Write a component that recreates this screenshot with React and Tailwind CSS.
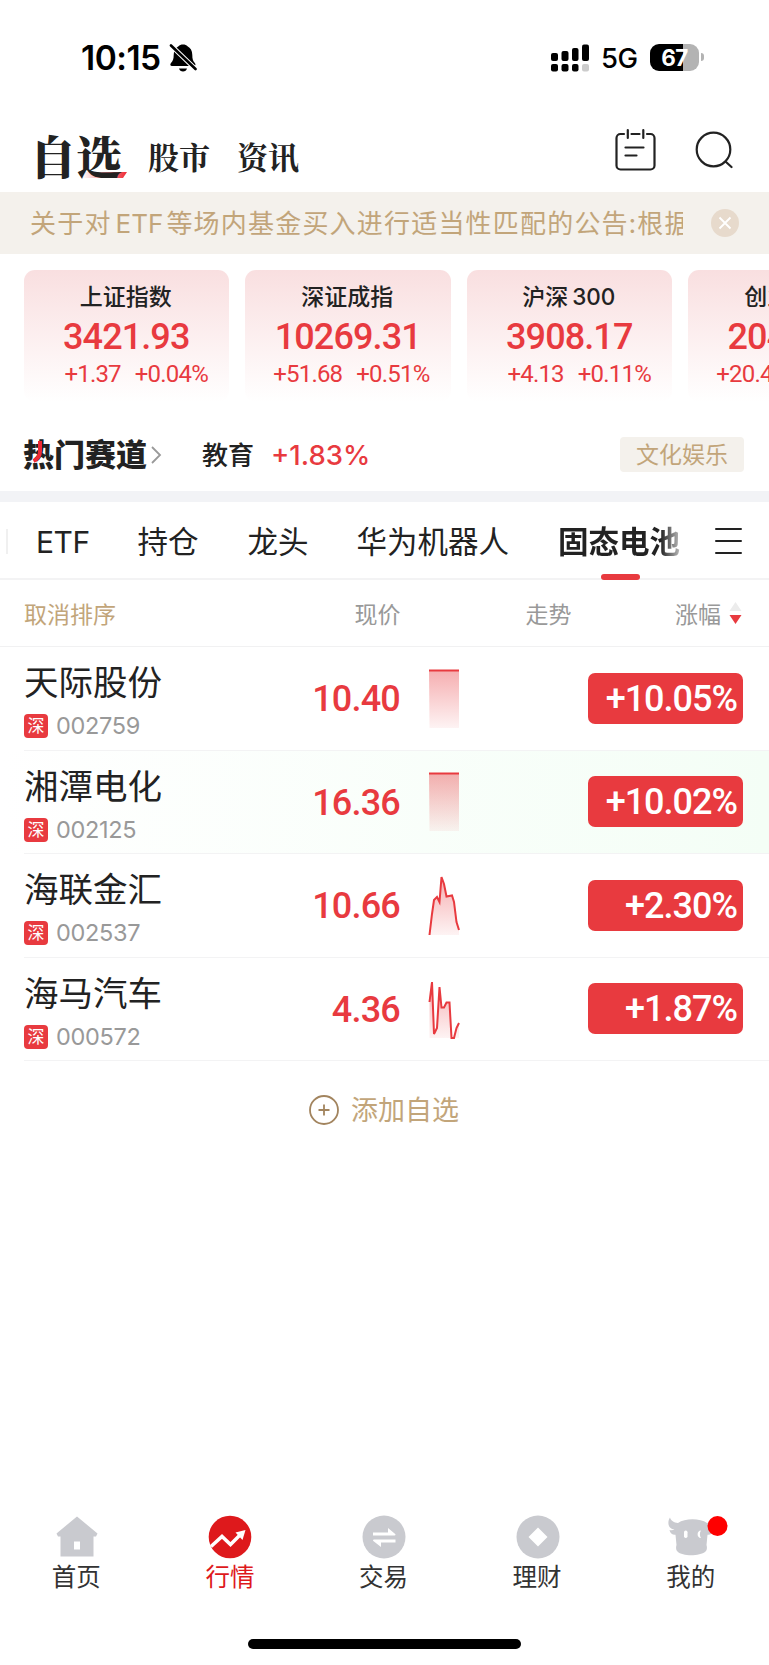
const indexes = [
    { name: "上证指数", value: "3421.93", change: "+1.37", percent: "+0.04%" },
    { name: "深证成指", value: "10269.31", change: "+51.68", percent: "+0.51%" },
    { name: "沪深", suffix: "300", value: "3908.17", change: "+4.13", percent: "+0.11%" },
    { name: "创业板指", value: "2048.57", change: "+20.41", percent: "+1.01%" },
];

const stocks = [
    { name: "天际股份", code: "002759", price: "10.40", percent: "+10.05%", line: "0,1.5 30,1.5" },
    { name: "湘潭电化", code: "002125", price: "16.36", percent: "+10.02%", line: "0,1.5 30,1.5", active: true },
    {
        name: "海联金汇",
        code: "002537",
        price: "10.66",
        percent: "+2.30%",
        line: "0.5,59 3,38 5,24 8,21 10.5,26 12.5,1 15,8 17.5,20.5 23,19.5 25,26 27.5,46 30,54",
    },
    {
        name: "海马汽车",
        code: "000572",
        price: "4.36",
        percent: "+1.87%",
        line: "0.5,23 3,3 5,55 8,49 10.5,8 12.5,28.5 15,28.5 17.5,23.5 20.5,23.5 22.5,59 25,59 27.5,49 30,44",
    },
];

function BellOff() {
    return (
        <svg width="28" height="30" viewBox="0 0 28 30" className="ml-[8px] shrink-0">
            <path d="M14 1.500c2 0 3.500.6 4.500 1.800 3 1.500 4.800 4.500 4.800 8.700 0 4 .7 6 2.500 8 1.200 1.300.8 3-1 3H3c-1.800 0-2.200-1.700-1-3 1.800-2 2.700-4 2.700-8 0-4.200 1.800-7.200 4.800-8.700 1-1.200 2.500-1.800 4.500-1.800z" />
            <path d="M10 25.500h8c-.5 1.900-2 3-4 3s-3.500-1.100-4-3z" />
            <path d="M1 1.500 27 26.500" stroke="#fff" strokeWidth="4.800" />
            <path d="M2 2.500 26.500 26" stroke="#000" strokeWidth="2.600" strokeLinecap="round" />
        </svg>
    );
}

function Signal() {
    return (
        <svg width="38" height="28" viewBox="0 0 38 28">
            <rect x="0" y="9" width="7" height="8" rx="2" />
            <rect x="10.500" y="7" width="7" height="10" rx="2" />
            <rect x="21" y="4" width="6.500" height="13" rx="2" />
            <rect x="31" y="0.500" width="7" height="16.500" rx="2" />
            <rect x="0" y="20" width="7" height="7.500" rx="2" />
            <rect x="10.500" y="20" width="7" height="7.500" rx="2" />
            <rect x="21" y="20" width="6.500" height="7.500" rx="2" />
            <rect x="31" y="20" width="7" height="7.500" rx="2" fill="#ccc" />
        </svg>
    );
}

function StatusBar() {
    return (
        <div className="h-[116px] flex items-center justify-between pl-[81px] pr-[65px] text-black font-['Inter',sans-serif]">
            <div className="flex items-center">
                <span className="text-[33.500px] font-semibold tracking-[-0.500px]">10:15</span>
                <BellOff />
            </div>
            <div className="flex items-center">
                <Signal />
                <span className="ml-[12px] mt-[2px] w-[49px] text-[27.500px] font-medium tracking-[-0.500px]">5G</span>
                <div className="-mt-[2px] w-[49px] h-[27px] rounded-[9px] bg-[linear-gradient(90deg,#000_67%,#b3b3b3_67%)] text-white text-[22.500px] leading-[27px] font-bold text-center tracking-[-0.500px]">
                    67
                </div>
                <div className="-mt-[2px] ml-[2px] w-[3px] h-[8px] rounded-r-full bg-[#b3b3b3]"></div>
            </div>
        </div>
    );
}

function Header() {
    return (
        <div className="h-[76px] flex items-center pl-[30px] pr-[36px] text-[#222] font-['Noto_Serif_CJK_SC','Noto_Serif_SC','Noto_Sans_CJK_SC',serif]">
            <div className="relative text-[46px] leading-[60px] font-black">
                <svg width="46" height="6" viewBox="0 0 46 6" className="absolute left-[52px] top-[48px]">
                    <defs>
                        <linearGradient id="swoosh">
                            <stop offset="0" stopColor="#ee2a35" stopOpacity="0" />
                            <stop offset="1" stopColor="#ee2a35" />
                        </linearGradient>
                    </defs>
                    <path d="M3 0H45L41 6H0z" fill="url(#swoosh)" />
                </svg>
                <span className="relative">自选</span>
            </div>
            <span className="ml-[26px] mt-[5px] text-[31px] font-bold">股市</span>
            <span className="ml-[27px] mt-[5px] text-[31px] font-bold">资讯</span>
            <svg width="42" height="44" viewBox="0 0 42 44" fill="none" stroke="#222" strokeWidth="2.200" strokeLinecap="round" className="ml-auto -mt-[10px]">
                <path d="M9 7H5.500a4 4 0 0 0-4 4v27.500a4 4 0 0 0 4 4h30a4 4 0 0 0 4-4V11a4 4 0 0 0-4-4H32M16.500 7h8M12.800 3v8M28.300 3v8" />
                <path d="M10.500 20.500h18M10.500 28.500h11" />
            </svg>
            <svg width="38" height="38" viewBox="0 0 38 38" fill="none" stroke="#222" strokeWidth="2.200" strokeLinecap="round" className="ml-[38px] -mt-[8px]">
                <circle cx="18.500" cy="18.500" r="16.800" />
                <path d="m31 31 5.500 5" />
            </svg>
        </div>
    );
}

function Notice() {
    return (
        <div className="h-[62px] bg-[#f4f1ec] flex items-center pl-[30px] pr-[30px]">
            <p className="w-[653px] pb-[1px] overflow-hidden whitespace-nowrap text-[26px] tracking-[1.200px] text-[#c2a57a]">
                关于对<span className="ml-[4px] mr-[3px] font-['Inter',sans-serif] text-[26px] tracking-[0px]">ETF</span>等场内基金买入进行适当性匹配的公告:根据
            </p>
            <svg width="28" height="28" viewBox="0 0 28 28" className="ml-auto shrink-0">
                <circle cx="14" cy="14" r="14" fill="#e7dacc" />
                <path d="m8.500 8.500 11 11m0-11-11 11" stroke="#fff" strokeWidth="1.800" />
            </svg>
        </div>
    );
}

function IndexCards() {
    return (
        <div className="h-[148px] pt-4 pl-[23.500px] flex gap-4 overflow-hidden">
            {indexes.map((item) => (
                <div key={item.name} className="w-[205.500px] h-[132px] shrink-0 rounded-[11px] bg-linear-to-b from-[#f9dfe0] to-white flex flex-col items-center pt-[11px]">
                    <div className="h-[28px] pr-[1px] text-[23px] leading-[28px] text-[#222] font-medium">
                        {item.name}
                        {item.suffix && <span className="ml-[4px] font-['Inter',sans-serif] text-[22.500px] leading-none">{item.suffix}</span>}
                    </div>
                    <div className="mt-[7px] text-[36px] leading-[42px] tracking-[-0.900px] font-medium text-[#e83a3f] font-['Roboto',sans-serif]">{item.value}</div>
                    <div className="mt-[2px] w-full pr-[21px] flex justify-end gap-[14px] text-[24px] leading-[28px] tracking-[-0.800px] text-[#e83a3f] font-['Roboto',sans-serif]">
                        <span>{item.change}</span>
                        <span>{item.percent}</span>
                    </div>
                </div>
            ))}
        </div>
    );
}

function HotTrack() {
    return (
        <div className="h-[89px] pt-[17px] flex items-center pl-[23px] pr-[25px] text-[#222]">
            <div className="relative -mt-[4px] text-[31px] leading-[40px] font-black">
                热门赛道
                <svg width="12" height="22" viewBox="0 0 12 22" className="absolute left-[9px] top-[8px]" fill="none" stroke="#ee2a35" strokeWidth="4">
                    <path d="M8 0V10q0 7-6.500 10" />
                </svg>
            </div>
            <svg width="12" height="20" viewBox="0 0 12 20" fill="none" stroke="#999" strokeWidth="1.800" className="ml-[3px]">
                <path d="m2 2 8 8-8 8" />
            </svg>
            <span className="ml-[40px] -mt-[3px] text-[26px] font-medium">教育</span>
            <span className="ml-[17px] mt-[1px] text-[27.500px] font-medium text-[#e83a3f] font-['Inter',sans-serif]">+1.83%</span>
            <span className="ml-auto -mt-[1px] w-[124px] h-[35px] rounded-[4px] bg-[#f4f1ec] text-[23px] leading-[33px] text-center text-[#c2a57a]">文化娱乐</span>
        </div>
    );
}

function GroupTabs() {
    return (
        <div className="h-[78px] border-b-2 border-[#f3f3f4] flex items-center text-[30.500px] text-[#222] pl-[6px] pr-[27px]">
            <div className="mt-[2px] w-[2px] h-[25px] bg-[#f0f0f0]"></div>
            <span className="ml-[28px] mt-[4px] font-['Inter',sans-serif] text-[30px] tracking-[-0.500px]">ETF</span>
            <span className="ml-[48px] mt-[2px]">持仓</span>
            <span className="ml-[49px] mt-[2px]">龙头</span>
            <span className="ml-[48px] mt-[2px]">华为机器人</span>
            <div className="relative ml-[49px] h-[78px] leading-[78px] font-bold">
                <span className="bg-[linear-gradient(90deg,#222_84%,#bbb_100%)] bg-clip-text text-transparent">固态电池</span>
                <div className="absolute left-[43px] bottom-[-1px] w-[39px] h-[6px] rounded-full bg-[#e83a3f]"></div>
            </div>
            <svg width="27" height="28" viewBox="0 0 27 28" stroke="#222" strokeWidth="2" strokeLinecap="round" className="ml-auto mt-[2px]">
                <path d="M1 2h25M1 14h25M1 26h25" />
            </svg>
        </div>
    );
}

function ListHeader() {
    return (
        <div className="h-[67px] border-b border-[#f1f1f2] flex items-center pl-6 pr-[27px] text-[23px] text-[#999]">
            <span className="w-[200px] text-[#c2a57a]">取消排序</span>
            <span className="w-[176.500px] text-right">现价</span>
            <span className="w-[171px] text-right">走势</span>
            <span className="ml-auto">涨幅</span>
            <svg width="13" height="24" viewBox="0 0 13 24" className="ml-[8px]">
                <path d="M6.500 1 12.500 10H.5z" fill="#ececec" />
                <path d="M.5 14h12l-6 9z" fill="#e83a3f" />
            </svg>
        </div>
    );
}

function Spark({ line }) {
    return (
        <svg width="31" height="62" viewBox="0 0 31 62" className="ml-[28px] mt-[3px] overflow-visible">
            <defs>
                <linearGradient id="fill" x1="0" y1="0" x2="0" y2="59" gradientUnits="userSpaceOnUse">
                    <stop offset="0" stopColor="#e83a3f" stopOpacity="0.420" />
                    <stop offset="1" stopColor="#e83a3f" stopOpacity="0.060" />
                </linearGradient>
            </defs>
            <polygon points={`${line} 30,59 0.500,59`} fill="url(#fill)" />
            <polyline points={line} fill="none" stroke="#e83a3f" strokeWidth="2" />
        </svg>
    );
}

function StockRow({ stock }) {
    return (
        <div className={`h-[103.500px] pl-6 ${stock.active ? "bg-linear-to-r from-white to-[#f4fef6]" : ""}`}>
            <div className="h-full border-b border-[#f3f3f4] flex items-center pr-[26px]">
                <div className="w-[200px] pt-[2px]">
                    <div className="text-[34.500px] leading-[42px] text-[#222]">{stock.name}</div>
                    <div className="mt-[12px] flex items-center gap-2">
                        <span className="w-[24px] h-[24px] rounded-[4px] bg-[#e83a3f] text-white text-[17px] leading-[22px] text-center">深</span>
                        <span className="text-[23.500px] leading-[26px] text-[#999] font-['Inter',sans-serif] tracking-[-0.300px]">{stock.code}</span>
                    </div>
                </div>
                <div className="w-[176px] pt-[2px] text-right text-[36px] tracking-[-0.800px] font-medium text-[#e83a3f] font-['Roboto',sans-serif]">{stock.price}</div>
                <div className="w-px"></div>
                <Spark line={stock.line} />
                <div className="ml-auto w-[155px] h-[51px] rounded-[7px] bg-[#e83a3f] pr-[6px] text-right text-[36px] leading-[52px] tracking-[-1px] font-medium text-white font-['Roboto',sans-serif]">
                    {stock.percent}
                </div>
            </div>
        </div>
    );
}

function HomeIcon() {
    return (
        <svg width="44" height="44" viewBox="0 0 44 44" fill="#c9cacf">
            <path fillRule="evenodd" d="M22 1.500 42.500 18.500 41 21.500H38.500V41.500H5.500V21.500H3L1.500 18.500zM19 26.500V34.500H25V26.500z" />
        </svg>
    );
}

function MarketIcon() {
    return (
        <svg width="44" height="44" viewBox="0 0 44 44">
            <circle cx="22" cy="22" r="21.300" fill="#de191c" />
            <path d="M3 31.500 14 21.500 22.500 29.500 33 19" fill="none" stroke="#fff" strokeWidth="3.500" />
            <path d="M27.500 17.500 37.500 15 34.500 25z" fill="#fff" />
        </svg>
    );
}

function TradeIcon() {
    return (
        <svg width="44" height="44" viewBox="0 0 44 44">
            <circle cx="22" cy="22" r="21.500" fill="#c9cacf" />
            <path d="M11 17.500H26V13L33.500 19.200Q33.500 20.500 32.500 20.500H11zM33.500 27.500H19V32L11 25.800Q11 24.500 12 24.500H33.500z" fill="#fff" />
        </svg>
    );
}

function WealthIcon() {
    return (
        <svg width="44" height="44" viewBox="0 0 44 44">
            <circle cx="22" cy="22" r="21.500" fill="#c9cacf" />
            <path d="m22 12.500 9.500 9.500-9.500 9.500-9.500-9.500z" fill="#fff" />
        </svg>
    );
}

function MineIcon() {
    return (
        <svg width="44" height="44" viewBox="0 0 44 44" fill="#c9cacf">
            <path d="M1 2.500c-2 3-2.300 7.500 0 10 1.200 1.300 2.800 2 4.500 2-1 .8-3 1-5 .6.500 3.200 3 5 6 4.700L7.500 30c-.8 2.500-.5 5 1 6.500 5 5 22 5 28 0 1.500-1.500 1.800-4 1-6.500l1-10.300c3 .3 5.500-1.500 6-4.700-2 .5-4 .3-5-.6 1.700 0 3.300-.7 4.500-2 2.300-2.500 2-7 0-10-.5 2.500-2.500 5.500-6 5.500-7-5-22-5-29 0C5.500 8 1.500 5.500 1 2.500z" />
            <rect x="15" y="15.500" width="3.500" height="7.500" rx="1.700" fill="#fff" />
            <path d="M32 15.500c-4.500 0-4.500 7.500 0 7.500-1.500-2-1.500-5.500 0-7.500z" fill="#fff" />
            <circle cx="48.500" cy="11" r="10" fill="#fe0000" />
        </svg>
    );
}

const navItems = [
    { label: "首页", icon: HomeIcon },
    { label: "行情", icon: MarketIcon, active: true },
    { label: "交易", icon: TradeIcon },
    { label: "理财", icon: WealthIcon },
    { label: "我的", icon: MineIcon },
];

function BottomNav() {
    return (
        <div className="grid grid-cols-5 h-[124px] pr-[1px]">
            {navItems.map(({ label, icon: Icon, active }) => (
                <div key={label} className="flex flex-col items-center [&>svg]:overflow-visible">
                    <Icon />
                    <span className={`pr-[1px] text-[24.500px] leading-[34px] ${active ? "text-[#de191c]" : "text-[#333]"}`}>{label}</span>
                </div>
            ))}
        </div>
    );
}

export default function App() {
    return (
        <div className="w-[769px] h-[1665px] bg-white flex flex-col overflow-hidden font-['Noto_Sans_CJK_SC',sans-serif]">
            <StatusBar />
            <Header />
            <Notice />
            <IndexCards />
            <HotTrack />
            <div className="h-[11px] shrink-0 bg-[#f2f3f6]"></div>
            <GroupTabs />
            <ListHeader />
            {stocks.map((stock) => (
                <StockRow key={stock.code} stock={stock} />
            ))}
            <div className="h-[98px] flex items-center justify-center gap-[12px] pr-[1px] text-[27px] text-[#c2a57a]">
                <svg width="30" height="30" viewBox="0 0 30 30" fill="none" stroke="#a2845e" strokeWidth="1.800">
                    <circle cx="15" cy="15" r="14" />
                    <path d="M9.500 15h11M15 9.500v11" />
                </svg>
                <span className="-mt-[1px]">添加自选</span>
            </div>
            <div className="mt-auto">
                <BottomNav />
                <div className="mx-auto mb-[16px] w-[273px] h-[10px] rounded-full bg-black"></div>
            </div>
        </div>
    );
}
